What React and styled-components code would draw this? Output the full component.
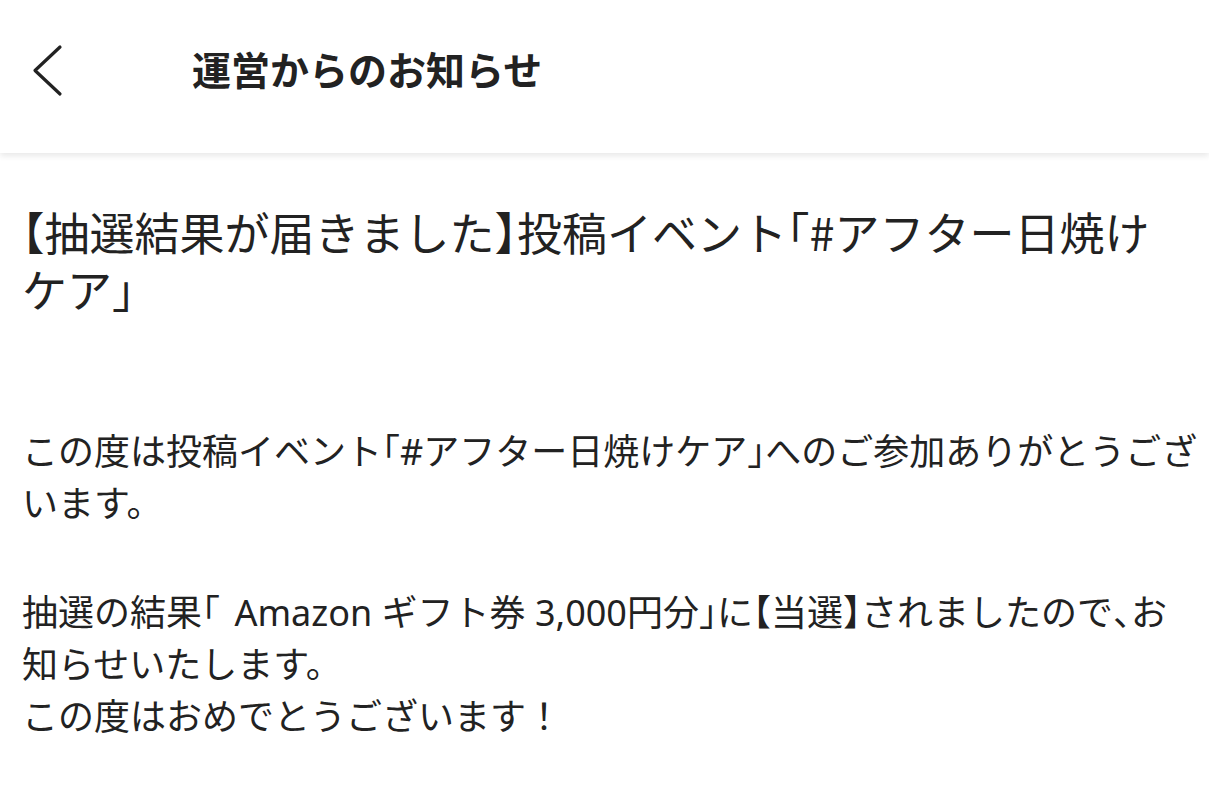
import React from 'react';
import styled, { createGlobalStyle } from 'styled-components';

const GlobalStyle = createGlobalStyle`
  body {
    margin: 0;
    background: #ffffff;
    font-family: "Noto Sans CJK JP", "Noto Sans", sans-serif;
    color: #222222;
  }
`

const Header = styled.header`
  height: 153px;
  display: flex;
  align-items: center;
  padding-left: 28px;
  background: #fff;
  box-shadow: 0 3px 6px rgba(0, 0, 0, 0.09);
`

const BackButton = styled.button`
  border: none;
  background: none;
  padding: 0;
  width: 38px;
  height: 56px;
  display: flex;
  align-items: center;
  justify-content: center;
  margin-top: -12px;
  cursor: pointer;
`

const HeaderTitle = styled.h1`
  margin: -17px 0 0 126px;
  font-size: 39px;
  font-weight: 700;
  color: #222;
`

const Content = styled.main`
  padding: 50px 10px 0 22px;
`

const Title = styled.h2`
  margin: 0 12px 0 0;
  font-size: 45px;
  font-weight: 400;
  line-height: 57px;
  color: #222;
`

const Body = styled.p`
  margin: 106px 0 0 0;
  font-family: "Noto Sans", "Noto Sans CJK JP", sans-serif;
  font-size: 36px;
  line-height: 52px;
  color: #222;
`

const Gap = styled.span`
  display: block;
  height: 54px;
`

/* brackets and commas are set half width, as on the device */
const Punct = styled.span`
  font-family: "Noto Sans CJK JP", sans-serif;
  font-feature-settings: "halt";
  margin-right: ${(p) => (p.$latin ? '0.4em' : '0')};
`

const ChevronLeft = () => (
  <svg width="36" height="56" viewBox="0 0 36 56" fill="none">
    <path d="M31 4 L6 27.5 L31 51" stroke="#222" strokeWidth="3.2" strokeLinecap="round" strokeLinejoin="round" />
  </svg>
)

export default function App() {
  return (
    <>
      <GlobalStyle />
      <Header>
        <BackButton aria-label="戻る">
          <ChevronLeft />
        </BackButton>
        <HeaderTitle>運営からのお知らせ</HeaderTitle>
      </Header>
      <Content>
        <Title>
          <Punct>【</Punct>抽選結果が届きました<Punct>】</Punct>投稿イベント<Punct>「</Punct>#アフター日焼けケア<Punct>」</Punct>
        </Title>
        <Body>
          この度は投稿イベント<Punct>「</Punct>#アフター日焼けケア<Punct>」</Punct>へのご参加ありがとうございます。
          <Gap />
          抽選の結果<Punct $latin>「</Punct>Amazon ギフト券 3,000円分<Punct>」</Punct>に<Punct>【</Punct>当選<Punct>】</Punct>されましたので<Punct>、</Punct>お知らせいたします。
          <br />
          この度はおめでとうございます！
        </Body>
      </Content>
    </>
  );
}
